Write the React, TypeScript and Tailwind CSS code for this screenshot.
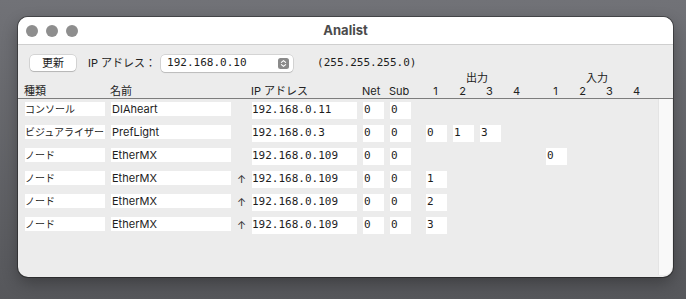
import React from 'react';

type Row = {
  type: string;
  name: string;
  arrow?: boolean;
  ip: string;
  out: (string | null)[];
  inp: (string | null)[];
};

const rows: Row[] = [
  { type: 'コンソール', name: 'DIAheart', ip: '192.168.0.11', out: [null, null, null, null], inp: [null, null, null, null] },
  { type: 'ビジュアライザー', name: 'PrefLight', ip: '192.168.0.3', out: ['0', '1', '3', null], inp: [null, null, null, null] },
  { type: 'ノード', name: 'EtherMX', ip: '192.168.0.109', out: [null, null, null, null], inp: ['0', null, null, null] },
  { type: 'ノード', name: 'EtherMX', arrow: true, ip: '192.168.0.109', out: ['1', null, null, null], inp: [null, null, null, null] },
  { type: 'ノード', name: 'EtherMX', arrow: true, ip: '192.168.0.109', out: ['2', null, null, null], inp: [null, null, null, null] },
  { type: 'ノード', name: 'EtherMX', arrow: true, ip: '192.168.0.109', out: ['3', null, null, null], inp: [null, null, null, null] },
];

const mono = "font-['DejaVu_Sans_Mono',monospace]";

const Cell: React.FC<{ value: string | null; first?: boolean }> = ({ value, first }) => (
  <div
    className={`w-[21px] h-[17px] shrink-0 ${first ? '' : 'ml-[6px]'} ${value !== null ? 'bg-white' : ''} pl-[1px] text-[11px] leading-[16px] ${mono}`}
  >
    {value}
  </div>
);

const Stepper = () => (
  <svg width="11" height="11" viewBox="0 0 11 11">
    <rect width="11" height="11" rx="2.5" fill="#8a8a8a" />
    <path d="M3.4 4.4 L5.5 2.6 L7.6 4.4" fill="none" stroke="#fff" strokeWidth="1.1" strokeLinecap="round" strokeLinejoin="round" />
    <path d="M3.4 6.6 L5.5 8.4 L7.6 6.6" fill="none" stroke="#fff" strokeWidth="1.1" strokeLinecap="round" strokeLinejoin="round" />
  </svg>
);

const App: React.FC = () => {
  return (
    <div className="w-[686px] h-[299px] pt-[17px] pl-[18px] bg-gradient-to-b from-[#717277] to-[#56575b] font-['Inter','Noto_Sans_CJK_JP',sans-serif] text-[#1d1d1d]">
      <div className="w-[655px] h-[260px] rounded-[10px] overflow-hidden bg-[#ececec] flex flex-col shadow-[0_0_0_1px_rgba(0,0,0,0.35),0_6px_16px_rgba(0,0,0,0.3)]">
        {/* title bar */}
        <div className="h-[28px] shrink-0 bg-white border-b border-[#cfcfcf] relative flex items-center justify-center">
          <div className="absolute left-[8px] top-[8px] flex gap-[8px]">
            <div className="w-[12px] h-[12px] rounded-full bg-[#8e8e8e]" />
            <div className="w-[12px] h-[12px] rounded-full bg-[#8e8e8e]" />
            <div className="w-[12px] h-[12px] rounded-full bg-[#8e8e8e]" />
          </div>
          <span className="text-[13px] font-bold text-[#4b4b4b]">Analist</span>
        </div>

        {/* toolbar */}
        <div className="h-[16px] mt-[10px] pl-[12px] flex items-center shrink-0">
          <button className="w-[46px] h-[16px] rounded-[4px] bg-white shadow-[0_0_0_0.5px_rgba(0,0,0,0.2),0_1px_1px_rgba(0,0,0,0.15)] text-[11px] leading-[16px] text-[#222]">
            更新
          </button>
          <span className="ml-[12px] text-[11px] text-[#222]">IP アドレス：</span>
          <div className="ml-[5px] w-[132px] h-[17px] rounded-[4px] bg-white shadow-[0_0_0_0.5px_rgba(0,0,0,0.2),0_1px_1px_rgba(0,0,0,0.12)] flex items-center justify-between pl-[6px] pr-[4px]">
            <span className={`text-[11px] ${mono}`}>192.168.0.10</span>
            <Stepper />
          </div>
          <span className={`ml-[24px] text-[11px] ${mono}`}>(255.255.255.0)</span>
        </div>

        {/* header */}
        <div className="shrink-0 border-b border-[#7d7d7d] text-[11px] text-[#222]">
          <div className="h-[14px] flex items-center pl-[408px]">
            <div className="w-[102px] text-center">出力</div>
            <div className="w-[102px] ml-[18px] text-center">入力</div>
          </div>
          <div className="h-[13px] flex items-center pl-[6px] leading-[13px]">
            <div className="w-[80px] shrink-0">種類</div>
            <div className="w-[120px] ml-[6px] shrink-0">名前</div>
            <div className="w-[21px] shrink-0" />
            <div className="w-[105px] shrink-0">IP アドレス</div>
            <div className="w-[27px] ml-[6px] shrink-0">Net</div>
            <div className="w-[21px] shrink-0">Sub</div>
            <div className="ml-[15px] flex">
              {['1', '2', '3', '4'].map((n, i) => (
                <div key={n} className={`w-[21px] text-center ${i ? 'ml-[6px]' : ''}`}>{n}</div>
              ))}
            </div>
            <div className="ml-[18px] flex">
              {['1', '2', '3', '4'].map((n, i) => (
                <div key={n} className={`w-[21px] text-center ${i ? 'ml-[6px]' : ''}`}>{n}</div>
              ))}
            </div>
          </div>
        </div>

        {/* body */}
        <div className="flex-1 flex min-h-0">
          <div className="flex-1 pt-[3px] pl-[7px]">
            {rows.map((r, idx) => (
              <div key={idx} className="h-[23px] flex items-start">
                <div className="w-[80px] h-[14px] shrink-0 bg-white text-[10px] leading-[14px] whitespace-nowrap overflow-hidden">
                  {r.type}
                </div>
                <div className="w-[120px] h-[14px] ml-[6px] shrink-0 bg-white pl-[1px] text-[11px] leading-[14px] whitespace-nowrap overflow-hidden">
                  {r.name}
                </div>
                <div className="w-[21px] h-[17px] shrink-0 text-center text-[11px] leading-[16px] text-[#333]">
                  {r.arrow ? '↑' : ''}
                </div>
                <div className={`w-[105px] h-[17px] shrink-0 bg-white text-[11px] leading-[16px] ${mono}`}>
                  {r.ip}
                </div>
                <div className="ml-[6px] flex">
                  <Cell value="0" first />
                </div>
                <div className="ml-[6px] flex">
                  <Cell value="0" first />
                </div>
                <div className="ml-[15px] flex">
                  {r.out.map((v, i) => (
                    <Cell key={i} value={v} first={i === 0} />
                  ))}
                </div>
                <div className="ml-[18px] flex">
                  {r.inp.map((v, i) => (
                    <Cell key={i} value={v} first={i === 0} />
                  ))}
                </div>
              </div>
            ))}
          </div>
          <div className="w-[14px] mr-[1px] mb-[2px] shrink-0 bg-[#f9f9f9] border-l border-[#e4e4e4] rounded-br-[8px]" />
        </div>
      </div>
    </div>
  );
};

export default App;
